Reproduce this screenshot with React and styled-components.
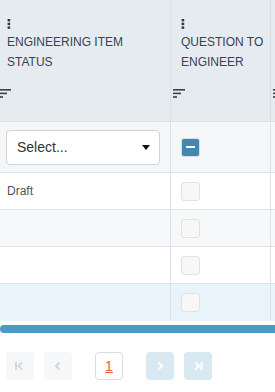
import React from 'react';
import styled, { createGlobalStyle } from 'styled-components';

const GlobalStyle = createGlobalStyle`
  body {
    margin: 0;
    background: #FFFFFF;
    font-family: "Liberation Sans", Arial, sans-serif;
  }
`;

const Page = styled.div`
  width: 275px;
  height: 392px;
  overflow: hidden;
  background: #FFFFFF;
`;

const Viewport = styled.div`
  width: 275px;
  overflow: hidden;
`;

const Table = styled.div`
  display: flex;
  flex-direction: column;
  width: 380px;
  margin-left: -3px;
`;

const Row = styled.div`
  display: flex;
  background: ${({ bg }) => bg || '#FFFFFF'};
  border-bottom: 1px solid ${({ last }) => (last ? 'transparent' : '#DFE3E7')};
`;

const Cell = styled.div`
  box-sizing: border-box;
  width: ${({ w }) => w}px;
  flex: none;
  height: ${({ h }) => h || 36}px;
  border-right: 1px solid #DDE2E6;
  display: flex;
  align-items: center;
  padding: 0 10px;
  font-size: 12px;
  color: #4A5562;
`;

const HeadCell = styled.div`
  box-sizing: border-box;
  width: ${({ w }) => w}px;
  flex: none;
  height: 121px;
  border-right: 1px solid #DAE0E5;
  padding: 19px 2px 0 10px;
  display: flex;
  flex-direction: column;
`;

const Label = styled.div`
  margin-top: 3px;
  height: 40px;
  font-size: 12px;
  line-height: 20px;
  color: #38434F;
  text-transform: uppercase;
`;

const SortBox = styled.div`
  margin: 17px 0 0 -8px;
  line-height: 0;
`;

const Select = styled.div`
  box-sizing: border-box;
  width: 154px;
  height: 35px;
  margin-left: -1px;
  border: 1px solid #CFD4D9;
  border-radius: 4px;
  background: #FFFFFF;
  display: flex;
  align-items: center;
  justify-content: space-between;
  padding: 0 9px 0 10px;
  font-size: 14px;
  color: #333333;
`;

const Caret = styled.span`
  width: 0;
  height: 0;
  border-left: 4.5px solid transparent;
  border-right: 4.5px solid transparent;
  border-top: 5px solid #111111;
`;

const Check = styled.div`
  box-sizing: border-box;
  width: 19px;
  height: 19px;
  border-radius: 3px;
  border: 1px solid ${({ on }) => (on ? '#D4DEE6' : '#E2E2E2')};
  background: ${({ on }) => (on ? '#3F88B1' : '#F7F7F7')};
  display: flex;
  align-items: center;
  justify-content: center;
`;

const Dash = styled.span`
  width: 9px;
  height: 2px;
  background: #FFFFFF;
`;

const ScrollTrack = styled.div`
  margin-top: 4px;
  height: 8px;
  overflow: hidden;
`;

const Thumb = styled.div`
  width: 300px;
  height: 8px;
  background: #4A9BC6;
  border-radius: 4px 0 0 4px;
`;

const Pager = styled.div`
  display: flex;
  align-items: center;
  padding: 19px 0 0 6px;
`;

const PageBtn = styled.div`
  box-sizing: border-box;
  width: 28px;
  height: 28px;
  border-radius: 4px;
  margin-left: ${({ gap }) => gap || 0}px;
  display: flex;
  align-items: center;
  justify-content: center;
  background: ${({ tone }) =>
    tone === 'active' ? '#FFFFFF' : tone === 'next' ? '#D9E9F2' : '#F6F7F9'};
  border: ${({ tone }) => (tone === 'active' ? '1px solid #DCDCDC' : 'none')};
  color: ${({ tone }) => (tone === 'next' ? '#FFFFFF' : '#D3D6DA')};
`;

const PageNum = styled.span`
  font-size: 14px;
  color: #EE5A3F;
  text-decoration: underline;
`;

const Kebab = () => (
  <svg width="4" height="10" viewBox="0 0 4 10">
    <rect x="0.6" y="0" width="2.6" height="2.4" fill="#2F3640" />
    <rect x="0.6" y="3.7" width="2.6" height="2.4" fill="#2F3640" />
    <rect x="0.6" y="7.4" width="2.6" height="2.4" fill="#2F3640" />
  </svg>
);

const SortIcon = () => (
  <svg width="12" height="9" viewBox="0 0 12 9">
    <rect x="0" y="0" width="12" height="1.6" fill="#37414D" />
    <rect x="0" y="3.6" width="8" height="1.6" fill="#37414D" />
    <rect x="0" y="7.2" width="4" height="1.6" fill="#37414D" />
  </svg>
);

const Chevron = ({ dir, bar }) => (
  <svg width="12" height="12" viewBox="0 0 12 12" fill="none" stroke="currentColor" strokeWidth="2">
    {dir === 'left' ? (
      <polyline points={bar ? '8,2.5 4.5,6 8,9.5' : '7.5,2.5 4,6 7.5,9.5'} />
    ) : (
      <polyline points={bar ? '3.5,2.5 7,6 3.5,9.5' : '4.5,2.5 8,6 4.5,9.5'} />
    )}
    {bar && (dir === 'left'
      ? <line x1="2" y1="2" x2="2" y2="10" />
      : <line x1="9.5" y1="2" x2="9.5" y2="10" />)}
  </svg>
);

const columns = [
  { w: 174, title: 'Engineering Item Status' },
  { w: 100, title: 'Question to Engineer' },
  { w: 100, title: '' },
];

const rows = [
  { status: 'Draft', bg: '#FFFFFF' },
  { status: '', bg: '#F7F8FA' },
  { status: '', bg: '#FFFFFF' },
  { status: '', bg: '#E8F3FA' },
];

const App = () => (
  <Page>
    <GlobalStyle />
    <Viewport>
      <Table>
        <Row bg="#E6EBF0">
          {columns.map((c, i) => (
            <HeadCell key={i} w={c.w}>
              <Kebab />
              <Label>{c.title}</Label>
              <SortBox>
                <SortIcon />
              </SortBox>
            </HeadCell>
          ))}
        </Row>
        <Row bg="#F4F6F8">
          <Cell w={174} h={50}>
            <Select>
              Select...
              <Caret />
            </Select>
          </Cell>
          <Cell w={100} h={50}>
            <Check on>
              <Dash />
            </Check>
          </Cell>
          <Cell w={100} h={50} />
        </Row>
        {rows.map((r, i) => (
          <Row key={i} bg={r.bg} last={i === rows.length - 1}>
            <Cell w={174}>{r.status}</Cell>
            <Cell w={100}>
              <Check />
            </Cell>
            <Cell w={100} />
          </Row>
        ))}
      </Table>
    </Viewport>
    <ScrollTrack>
      <Thumb />
    </ScrollTrack>
    <Pager>
      <PageBtn>
        <Chevron dir="left" bar />
      </PageBtn>
      <PageBtn gap={10}>
        <Chevron dir="left" />
      </PageBtn>
      <PageBtn gap={23} tone="active">
        <PageNum>1</PageNum>
      </PageBtn>
      <PageBtn gap={23} tone="next">
        <Chevron dir="right" />
      </PageBtn>
      <PageBtn gap={10} tone="next">
        <Chevron dir="right" bar />
      </PageBtn>
    </Pager>
  </Page>
);

export default App;
